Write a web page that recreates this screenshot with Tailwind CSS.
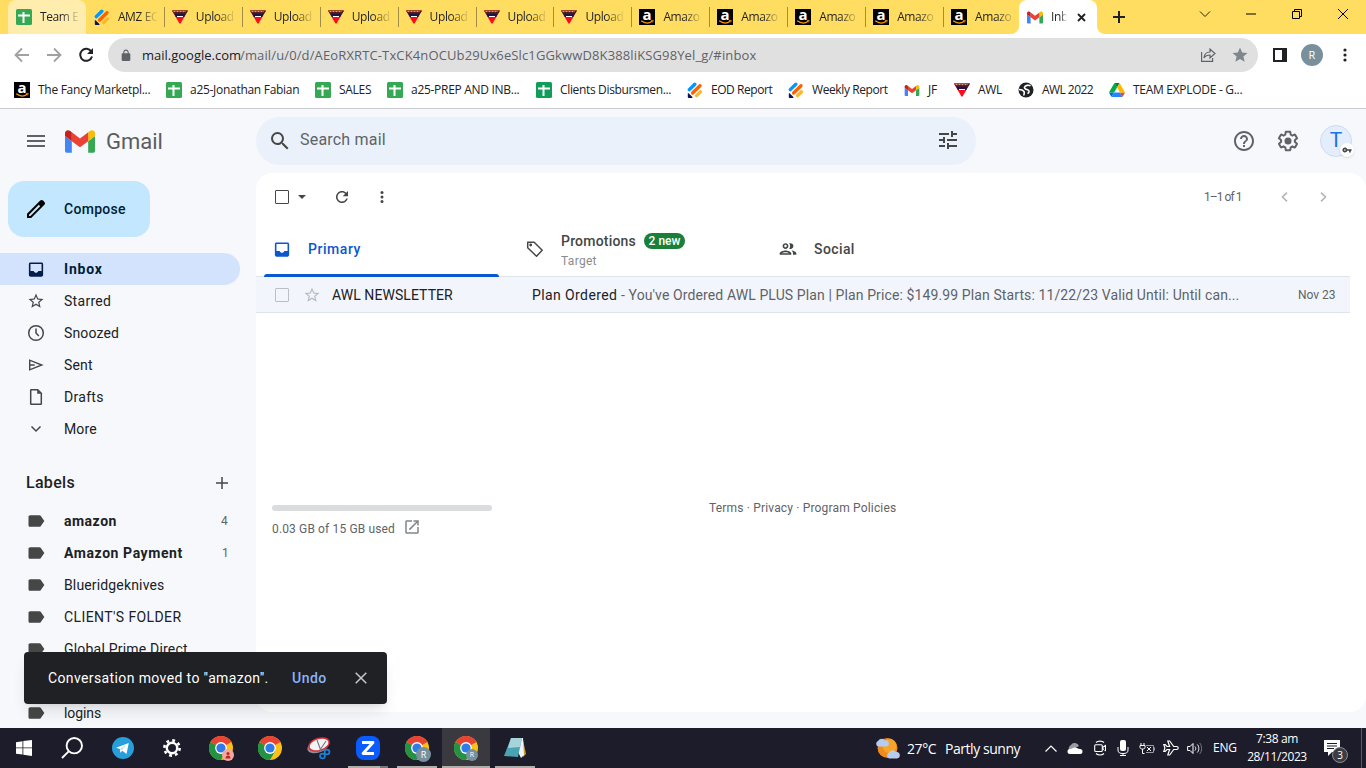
<!DOCTYPE html>
<html lang="en">
<head>
    <meta charset="UTF-8">
    <meta name="viewport" content="width=device-width, initial-scale=1.0">
    <title>Inbox - Gmail</title>
    <script src="https://cdn.jsdelivr.net/npm/@tailwindcss/browser@4"></script>
</head>
<body class="w-[1366px] h-[768px] overflow-hidden bg-[#f6f8fc] text-[#202124] font-['Roboto',sans-serif]">
    <!-- Shared icons -->
    <svg class="hidden">
        <symbol id="sheets" viewBox="0 0 16 16"><rect width="16" height="16" rx="1.500" fill="#34a853"/><path d="M2 6.500h12M7.500 3v11" stroke="#fff" stroke-width="2"/></symbol>
        <symbol id="sheets2" viewBox="0 0 16 16"><rect width="16" height="16" rx="1.500" fill="#0f9d58"/><path d="M2 6.500h12M7.500 3v11" stroke="#fff" stroke-width="2"/></symbol>
        <symbol id="jotform" viewBox="0 0 16 16"><g stroke-width="3.400" stroke-linecap="round"><path d="M2.300 7.600 7.800 2.200" stroke="#0099ff"/><path d="M5.600 11 13 3.800" stroke="#ff6100"/><path d="M9.600 13.600l3.800-3.700" stroke="#ffb629"/></g><path d="M.8 11.600V15c0 .5.4.9.9.9h3.400c.5 0 .6-.5.3-.8L1.600 11.300c-.3-.3-.8-.1-.8.3z" fill="#0a1551"/></symbol>
        <symbol id="awl" viewBox="0 0 16 16"><path d="M0 1.500h16L8.600 14.500H7.400z" fill="#ff0a1a"/><path d="M0 1.500h16l-1.500 2.800h-13z" fill="#4a1a1c"/><path d="M1.800 4.300h12.400l-2 3.700H3.800z" fill="#1a1646"/><path d="M1.500 2.600h12.500" stroke="#e9b08a" stroke-dasharray="2 1"/><path d="M5 7.500h6" stroke="#fff"/></symbol>
        <symbol id="amazon" viewBox="0 0 16 16"><rect width="16" height="16" fill="#000"/><text x="8" y="10.600" text-anchor="middle" font-family="Open Sans, sans-serif" font-weight="700" font-size="15" fill="#fff">a</text><path d="M2.200 11.800c3.500 2.600 8 2.600 11 .5" fill="none" stroke="#ff9900" stroke-width="1.200"/><path d="M12 11.500l2.300-.1-.7 2" fill="none" stroke="#ff9900" stroke-width=".8"/></symbol>
        <symbol id="gmail" viewBox="52 42 88 66"><path fill="#4285f4" d="M58 108h14V74L52 59v43c0 3.320 2.690 6 6 6"/><path fill="#34a853" d="M120 108h14c3.320 0 6-2.690 6-6V59l-20 15"/><path fill="#fbbc04" d="M120 48v26l20-15v-8c0-7.420-8.470-11.650-14.400-7.200"/><path fill="#ea4335" d="M72 74V48l24 18 24-18v26L96 92"/><path fill="#c5221f" d="M52 51v8l20 15V48l-5.600-4.200c-5.940-4.450-14.400-.22-14.400 7.200"/></symbol>
        <symbol id="drive" viewBox="0 0 87.300 78"><path d="m6.600 66.850 3.850 6.650c.8 1.400 1.950 2.500 3.300 3.300l13.750-23.800h-27.500c0 1.550.4 3.100 1.200 4.500z" fill="#0066da"/><path d="m43.650 25-13.750-23.800c-1.350.8-2.500 1.900-3.300 3.300l-25.400 44a9.060 9.060 0 0 0-1.200 4.500h27.500z" fill="#00ac47"/><path d="m73.550 76.800c1.350-.8 2.500-1.900 3.300-3.300l1.600-2.750 7.650-13.250c.8-1.400 1.200-2.950 1.200-4.500h-27.500l5.850 11.500z" fill="#ea4335"/><path d="m43.650 25 13.750-23.800c-1.350-.8-2.900-1.200-4.500-1.200h-18.500c-1.600 0-3.150.45-4.500 1.200z" fill="#00832d"/><path d="m59.800 53h-32.300l-13.750 23.800c1.350.8 2.900 1.200 4.500 1.200h50.800c1.600 0 3.150-.45 4.500-1.200z" fill="#2684fc"/><path d="m73.400 26.500-12.700-22c-.8-1.400-1.950-2.500-3.300-3.300l-13.750 23.800 16.150 28h27.450c0-1.550-.4-3.100-1.200-4.500z" fill="#ffba00"/></symbol>
        <symbol id="globe" viewBox="0 0 16 16"><circle cx="8" cy="8" r="7.500" fill="#202124"/><path d="M12.500 3.800C10.500 2.500 7 3.500 6.500 5.200s2 2.300 3.500 2.800 1.500 2.500-.5 3.500M1 7.500c2 0 4 .5 5 2s-.5 2.500 0 4" fill="none" stroke="#fff" stroke-width="1.600"/></symbol>
        <symbol id="inbox" viewBox="0 0 24 24"><path fill-rule="evenodd" d="M19 3H5c-1.100 0-2 .9-2 2v14c0 1.100.9 2 2 2h14c1.100 0 2-.9 2-2V5c0-1.100-.9-2-2-2zM5 5v8.800h4c.6 1.500 1.700 2.300 3 2.300s2.400-.8 3-2.300h4V5z"/></symbol>
        <symbol id="star" viewBox="0 0 24 24"><path d="M22 9.240l-7.190-.62L12 2 9.190 8.630 2 9.240l5.460 4.730L5.820 21 12 17.270 18.180 21l-1.630-7.030L22 9.240zM12 15.400l-3.760 2.270 1-4.280-3.320-2.880 4.380-.38L12 6.100l1.710 4.040 4.380.38-3.320 2.880 1 4.280L12 15.400z"/></symbol>
        <symbol id="label" viewBox="0 0 24 24"><path d="M17.630 5.840C17.270 5.330 16.670 5 16 5L5 5.010C3.900 5.010 3 5.900 3 7v10c0 1.100.9 1.990 2 1.990L16 19c.67 0 1.270-.33 1.630-.84L22 12l-4.370-6.160z"/></symbol>
        <symbol id="chrome" viewBox="0 0 24 24"><circle cx="12" cy="12" r="12" fill="#fbc116"/><path d="M12 12 1.600 6A12 12 0 0 1 22.400 6z" fill="#ea4335"/><path d="M1.600 6A12 12 0 0 0 12 24l5.200-9z" fill="#229342"/><circle cx="12" cy="12" r="5.900" fill="#fff"/><circle cx="12" cy="12" r="4.600" fill="#2f7bea"/></symbol>
    </svg>

    <!-- Tab strip -->
    <div class="h-[34px] bg-[#ffdd60] flex items-stretch font-['Open_Sans',sans-serif] text-[12px]">
        <div id="tabs" class="flex pl-2 w-[1021px] shrink-0"></div>
        <div class="relative -ml-[2px] w-[78px] bg-white rounded-t-lg flex items-center pl-2 shrink-0">
            <svg class="absolute -left-2 bottom-0 w-2 h-2" viewBox="0 0 8 8" fill="#fff"><path d="M8 0v8H0a8 8 0 0 0 8-8z"/></svg>
            <svg class="absolute -right-2 bottom-0 w-2 h-2" viewBox="0 0 8 8" fill="#fff"><path d="M0 0v8h8a8 8 0 0 1-8-8z"/></svg>
            <svg class="w-4 h-[13px]"><use href="#gmail"/></svg>
            <span class="ml-2 w-[18px] overflow-hidden whitespace-nowrap tracking-[-0.4px] bg-linear-to-r from-[#202124] from-50% to-white to-90% bg-clip-text text-transparent">Inb</span>
            <svg class="ml-2 w-[9px] h-[9px]" viewBox="0 0 9 9" stroke="#202124" stroke-width="1.800"><path d="M1 1l7 7M8 1l-7 7"/></svg>
        </div>
        <div class="flex-1 flex items-center">
            <svg class="ml-4 w-3 h-3" viewBox="0 0 12 12" stroke="#202124" stroke-width="2"><path d="M6 0v12M0 6h12"/></svg>
            <svg class="ml-[74px] -mt-1.5 w-3 h-[7px]" viewBox="0 0 12 7" fill="none" stroke="#202124"><path d="M1 .5l5 5 5-5"/></svg>
            <svg class="ml-[35px] -mt-1.5 w-[10px] h-[2px]" viewBox="0 0 10 2"><rect y=".5" width="10" height="1" fill="#000"/></svg>
            <svg class="ml-[36px] -mt-1.5 w-[10px] h-[10px]" viewBox="0 0 10 10" fill="none" stroke="#000"><path d="M.5 2.500h7v7h-7zM2.500 2.500v-2h7v7h-2"/></svg>
            <svg class="ml-[36px] -mt-1.5 w-[10px] h-[10px]" viewBox="0 0 10 10" stroke="#000"><path d="M0 0l10 10M10 0L0 10"/></svg>
        </div>
    </div>

    <!-- Toolbar -->
    <div class="h-[38px] bg-white flex items-center pt-1 font-['Open_Sans',sans-serif]">
        <svg class="ml-[14px] w-4 h-4" viewBox="0 0 16 16" fill="none" stroke="#a0a1a3" stroke-width="1.800"><path d="M15 8H2M8 1.500 1.500 8 8 14.500"/></svg>
        <svg class="ml-4 w-4 h-4" viewBox="0 0 16 16" fill="none" stroke="#a0a1a3" stroke-width="1.800"><path d="M1 8h13M8 1.500 14.500 8 8 14.500"/></svg>
        <svg class="ml-4 w-4 h-4" viewBox="0 0 16 16" fill="none" stroke="#202124" stroke-width="2"><path d="M13.300 4.600A6 6 0 1 0 14 9.500"/><path d="M15 1v6H9z" fill="#202124" stroke="none"/></svg>
        <div class="ml-[14px] w-[1150px] h-[34px] rounded-full bg-[#e0e0e0] flex items-center pl-[10px] pr-[9px]">
            <svg class="w-4 h-[13px]" viewBox="0 0 24 24" fill="#5f6368"><path d="M18 8h-1V6c0-2.760-2.240-5-5-5S7 3.240 7 6v2H6c-1.100 0-2 .9-2 2v10c0 1.100.9 2 2 2h12c1.100 0 2-.9 2-2V10c0-1.100-.9-2-2-2zM9 6c0-1.660 1.340-3 3-3s3 1.340 3 3v2H9V6z"/></svg>
            <div class="ml-2 pt-px flex text-[13px]"><span class="w-[98px] whitespace-nowrap">mail.google.com</span><span class="w-[520px] whitespace-nowrap tracking-[0.13px] text-[#5f6368]">/mail/u/0/d/AEoRXRTC-TxCK4nOCUb29Ux6eSlc1GGkwwD8K388liKSG98Yel_g/#inbox</span></div>
            <svg class="ml-auto w-4 h-4" viewBox="0 0 16 16" fill="none" stroke="#5f6368" stroke-width="1.200"><path d="M1.600 5v9.400h11V11M4 11c.3-4 2.500-6 6-6V2l5 4.500L10 11V8c-2.500 0-4.500.6-6 3z"/></svg>
            <svg class="ml-[15px] w-[18px] h-[18px]" viewBox="0 0 24 24" fill="#80868b"><path d="M12 17.270L18.180 21l-1.640-7.030L22 9.240l-7.190-.61L12 2 9.190 8.630 2 9.240l5.460 4.730L5.820 21z"/></svg>
        </div>
        <svg class="ml-[15px] w-[14px] h-[14px]" viewBox="0 0 14 14"><path d="M1 1h12v12H1z" fill="#fff" stroke="#202124" stroke-width="2"/><path d="M9 0h5v14H9z" fill="#202124"/></svg>
        <div class="ml-[14px] w-[22px] h-[22px] rounded-full bg-[#78909c] text-white text-[11px] flex items-center justify-center">R</div>
        <svg class="ml-5 w-[4px] h-[14px]" viewBox="0 0 4 14" fill="#202124"><circle cx="2" cy="2" r="1.600"/><circle cx="2" cy="7" r="1.600"/><circle cx="2" cy="12" r="1.600"/></svg>
    </div>

    <!-- Bookmarks -->
    <div class="h-[37px] bg-white border-b border-[#c9cbce] flex items-center gap-4 pl-[14px] font-['Open_Sans',sans-serif] text-[12px] tracking-[-0.29px]">
        <div class="flex items-center gap-2"><svg class="w-4 h-4"><use href="#amazon"/></svg><span class="w-[112px] whitespace-nowrap">The Fancy Marketpl...</span></div>
        <div class="flex items-center gap-2"><svg class="w-4 h-4"><use href="#sheets"/></svg><span class="w-[109px] whitespace-nowrap">a25-Jonathan Fabian</span></div>
        <div class="flex items-center gap-2"><svg class="w-4 h-4"><use href="#sheets"/></svg><span class="w-[32px] whitespace-nowrap">SALES</span></div>
        <div class="flex items-center gap-2"><svg class="w-4 h-4"><use href="#sheets"/></svg><span class="w-[109px] whitespace-nowrap">a25-PREP AND INB...</span></div>
        <div class="flex items-center gap-2"><svg class="w-4 h-4"><use href="#sheets2"/></svg><span class="w-[111px] whitespace-nowrap tracking-[-0.34px]">Clients Disbursmen...</span></div>
        <div class="flex items-center gap-2"><svg class="w-4 h-4"><use href="#jotform"/></svg><span class="w-[61px] whitespace-nowrap tracking-[-0.45px]">EOD Report</span></div>
        <div class="flex items-center gap-2"><svg class="w-4 h-4"><use href="#jotform"/></svg><span class="w-[76px] whitespace-nowrap tracking-[-0.4px]">Weekly Report</span></div>
        <div class="flex items-center gap-2"><svg class="w-4 h-[11px]"><use href="#gmail"/></svg><span class="w-[10px] whitespace-nowrap">JF</span></div>
        <div class="flex items-center gap-2"><svg class="w-4 h-4"><use href="#awl"/></svg><span class="w-[24px] whitespace-nowrap">AWL</span></div>
        <div class="flex items-center gap-2"><svg class="w-4 h-4"><use href="#globe"/></svg><span class="w-[51px] whitespace-nowrap tracking-[-0.55px]">AWL 2022</span></div>
        <div class="flex items-center gap-2"><svg class="w-4 h-[14px]"><use href="#drive"/></svg><span class="w-[111px] whitespace-nowrap">TEAM EXPLODE - G...</span></div>
    </div>

    <!-- Gmail -->
    <div class="relative h-[619px] overflow-hidden">
        <div class="h-16 flex items-center">
            <svg class="ml-[27px] w-[18px] h-3" viewBox="0 0 18 12" fill="#5f6368"><path d="M0 0h18v2H0zM0 5h18v2H0zM0 10h18v2H0z"/></svg>
            <svg class="ml-5 w-[30px] h-[23px]"><use href="#gmail"/></svg>
            <span class="ml-[11px] pt-px w-[56px] whitespace-nowrap text-[22px] leading-none text-[#5a5d60]">Gmail</span>
            <div class="ml-[94px] w-[720px] h-12 rounded-full bg-[#eaf1fb] flex items-center">
                <svg class="ml-3 w-6 h-6" viewBox="0 0 24 24" fill="#444746"><path d="M15.500 14h-.79l-.28-.27A6.471 6.471 0 0 0 16 9.500 6.500 6.500 0 1 0 9.500 16c1.610 0 3.090-.59 4.230-1.570l.27.28v.79l5 4.990L20.490 19l-4.990-5zm-6 0C7.010 14 5 11.990 5 9.500S7.010 5 9.500 5 14 7.010 14 9.500 11.990 14 9.500 14z"/></svg>
                <span class="ml-2 pb-0.5 w-[88px] whitespace-nowrap text-[16px] tracking-[0.2px] text-[#5f6368]">Search mail</span>
                <svg class="ml-auto mr-4 -mt-0.5 w-6 h-6" viewBox="0 0 24 24" fill="#444746"><path d="M3 17v2h6v-2H3zM3 5v2h10V5H3zm10 16v-2h8v-2h-8v-2h-2v6h2zM7 9v2H3v2h4v2h2V9H7zm14 4v-2H11v2h10zm-6-4h2V7h4V5h-4V3h-2v6z"/></svg>
            </div>
            <svg class="ml-[256px] w-6 h-6" viewBox="0 0 24 24" fill="#5f6368"><path d="M11 18h2v-2h-2v2zm1-16C6.480 2 2 6.480 2 12s4.480 10 10 10 10-4.480 10-10S17.520 2 12 2zm0 18c-4.410 0-8-3.590-8-8s3.590-8 8-8 8 3.590 8 8-3.590 8-8 8zm0-14c-2.210 0-4 1.790-4 4h2c0-1.100.9-2 2-2s2 .9 2 2c0 2-3 1.750-3 5h2c0-2.250 3-2.500 3-5 0-2.210-1.790-4-4-4z"/></svg>
            <svg class="ml-5 w-6 h-6" viewBox="0 0 24 24" fill="#5f6368"><path d="M13.850 22.250h-3.700c-.74 0-1.360-.54-1.450-1.270l-.27-1.890c-.27-.14-.53-.29-.79-.46l-1.800.72c-.7.26-1.470-.03-1.810-.65L2.200 15.530c-.35-.66-.2-1.440.36-1.880l1.530-1.190c-.01-.15-.02-.3-.02-.46 0-.15.010-.31.020-.46l-1.520-1.190c-.59-.45-.74-1.260-.37-1.880l1.850-3.190c.34-.62 1.110-.9 1.790-.63l1.810.73c.26-.17.52-.32.78-.46l.27-1.910c.09-.7.71-1.250 1.440-1.250h3.700c.74 0 1.360.54 1.450 1.270l.27 1.890c.27.14.53.29.79.46l1.800-.72c.71-.26 1.480.03 1.820.65l1.840 3.180c.36.66.2 1.440-.36 1.880l-1.520 1.190c.01.15.02.3.02.46s-.01.31-.02.46l1.520 1.190c.56.45.72 1.230.37 1.860l-1.860 3.220c-.34.62-1.110.9-1.800.63l-1.800-.72c-.26.17-.52.32-.78.46l-.27 1.910c-.1.68-.72 1.220-1.460 1.220zm-3.230-2h2.760l.37-2.550.53-.22c.44-.18.88-.44 1.340-.78l.45-.34 2.380.96 1.380-2.400-2.030-1.580.07-.56c.03-.26.06-.51.06-.78s-.03-.53-.06-.78l-.07-.56 2.030-1.580-1.390-2.400-2.390.96-.45-.35c-.42-.32-.87-.58-1.330-.77l-.52-.22-.37-2.550h-2.760l-.37 2.550-.53.21c-.44.19-.88.44-1.340.79l-.45.33-2.380-.95-1.390 2.390 2.030 1.580-.07.56a7 7 0 0 0-.06.79c0 .26.02.53.06.78l.07.56-2.030 1.580 1.380 2.400 2.390-.96.45.35c.43.33.86.58 1.330.77l.53.22.38 2.550z"/><circle cx="12" cy="12" r="3.500"/></svg>
            <div class="relative ml-5 w-8 h-8 rounded-full bg-[#e4edfb] border border-[#cfdcf0] flex items-center justify-center text-[21px] text-[#1a73e8]">T
                <div class="absolute left-[19px] top-[17px] w-[14px] h-[14px] rounded-full bg-white shadow flex items-center justify-center">
                    <svg class="w-[10px] h-[10px]" viewBox="0 0 24 24" fill="#444746"><path d="M12.650 10C11.830 7.670 9.610 6 7 6c-3.310 0-6 2.690-6 6s2.690 6 6 6c2.610 0 4.830-1.670 5.650-4H17v4h4v-4h2v-4H12.650zM7 14c-1.100 0-2-.9-2-2s.9-2 2-2 2 .9 2 2-.9 2-2 2z"/></svg>
                </div>
            </div>
        </div>

        <div class="flex">
            <!-- Sidebar -->
            <div class="w-64 h-[555px] shrink-0 overflow-hidden text-[14px] tracking-[0.15px]">
                <div class="mt-2 ml-2 w-[142px] h-14 rounded-2xl bg-[#c2e7ff] flex items-center text-[#001d35] font-medium">
                    <svg class="ml-4 w-6 h-6" viewBox="0 0 24 24" fill="#000"><path d="M20.410 4.940l-1.350-1.350c-.78-.78-2.050-.78-2.830 0L3 16.820V21h4.180L20.410 7.770c.79-.78.79-2.050 0-2.830zm-14 14.120L5 19v-1.360l9.820-9.820 1.410 1.410-9.820 9.830z"/></svg>
                    <span class="ml-4 w-[63px] whitespace-nowrap tracking-[0.3px]">Compose</span>
                </div>
                <div class="mt-4 h-8 w-60 rounded-r-full bg-[#d3e3fd] flex items-center pl-[26px] gap-[18px] text-[#001d35] font-bold">
                    <svg class="w-5 h-[19px]" fill="#041e49"><use href="#inbox"/></svg>
                    <span class="w-[41px] whitespace-nowrap tracking-[0.8px]">Inbox</span>
                </div>
                <div class="h-8 flex items-center pl-[26px] gap-[18px]"><svg class="w-5 h-[18px]" fill="#444746"><use href="#star"/></svg><span class="w-[49px] whitespace-nowrap tracking-[0.3px]">Starred</span></div>
                <div class="h-8 flex items-center pl-[26px] gap-[18px]"><svg class="w-5 h-5" viewBox="0 0 20 20" fill="none" stroke="#444746" stroke-width="1.500"><circle cx="10" cy="10" r="7.300"/><path d="M10 5.500V10l2.800 3"/></svg><span class="w-[57px] whitespace-nowrap">Snoozed</span></div>
                <div class="h-8 flex items-center pl-[26px] gap-[18px]"><svg class="w-5 h-5" viewBox="0 0 20 20" fill="none" stroke="#444746" stroke-width="1.400"><path d="M3.700 5.200v9.600L15.800 10zM3.700 10h5"/></svg><span class="w-[30px] whitespace-nowrap">Sent</span></div>
                <div class="h-8 flex items-center pl-[26px] gap-[18px]"><svg class="w-5 h-5" viewBox="0 0 20 20" fill="none" stroke="#444746" stroke-width="1.500"><path d="M4.700 3.200c0-.3.200-.5.500-.5h6.500l3.600 3.600v10.500c0 .3-.2.5-.5.5H5.200c-.3 0-.5-.2-.5-.5z"/><path d="M11.200 2.700v4h4z" fill="#444746" stroke="none"/></svg><span class="w-[42px] whitespace-nowrap tracking-[0.3px]">Drafts</span></div>
                <div class="h-8 flex items-center pl-[26px] gap-[18px]"><svg class="w-5 h-5" viewBox="0 0 20 20" fill="none" stroke="#444746" stroke-width="1.500"><path d="M5.500 7.500 10 12l4.500-4.500"/></svg><span class="w-[35px] whitespace-nowrap">More</span></div>
                <div class="h-[60px] pt-4 flex items-center pl-[26px] font-medium text-[16px]">
                    <span class="w-[51px] whitespace-nowrap tracking-[0.3px]">Labels</span>
                    <svg class="ml-[139px] w-3 h-3" viewBox="0 0 12 12" stroke="#444746" stroke-width="1.500"><path d="M6 0v12M0 6h12"/></svg>
                </div>
                <div class="h-8 flex items-center pl-[26px] gap-[18px] font-bold"><svg class="w-5 h-5" fill="#444746"><use href="#label"/></svg><span class="w-[55px] whitespace-nowrap tracking-[0.5px]">amazon</span><span class="ml-auto mr-7 text-[12px] font-normal text-[#5f6368]">4</span></div>
                <div class="h-8 flex items-center pl-[26px] gap-[18px] font-bold"><svg class="w-5 h-5" fill="#444746"><use href="#label"/></svg><span class="w-[121px] whitespace-nowrap tracking-[0.58px]">Amazon Payment</span><span class="ml-auto mr-[27px] text-[12px] font-normal text-[#5f6368]">1</span></div>
                <div class="h-8 flex items-center pl-[26px] gap-[18px]"><svg class="w-5 h-5" fill="#444746"><use href="#label"/></svg><span class="w-[102px] whitespace-nowrap">Blueridgeknives</span></div>
                <div class="h-8 flex items-center pl-[26px] gap-[18px]"><svg class="w-5 h-5" fill="#444746"><use href="#label"/></svg><span class="w-[119px] whitespace-nowrap tracking-[0.4px]">CLIENT'S FOLDER</span></div>
                <div class="h-16 flex items-start pt-1.5 pl-[26px] gap-[18px]"><svg class="w-5 h-5" fill="#444746"><use href="#label"/></svg><span class="w-[126px] whitespace-nowrap tracking-[0.2px]">Global Prime Direct</span></div>
                <div class="h-8 flex items-center pl-[26px] gap-[18px]"><svg class="w-5 h-5" fill="#444746"><use href="#label"/></svg><span class="w-[40px] whitespace-nowrap tracking-[-0.1px]">logins</span></div>
            </div>

            <!-- Mail list -->
            <div class="w-[1110px] h-[539px] rounded-2xl bg-white overflow-hidden">
                <div class="h-12 flex items-center">
                    <div class="ml-[19px] w-[14px] h-[14px] border-[1.5px] border-[#444746] rounded-[1px]"></div>
                    <svg class="ml-[9px] w-2 h-1" viewBox="0 0 8 4" fill="#444746"><path d="M0 0h8L4 4z"/></svg>
                    <svg class="ml-[27px] w-[18px] h-[18px]" viewBox="0 0 24 24" fill="#444746"><path d="M17.650 6.350C16.200 4.900 14.210 4 12 4c-4.420 0-7.990 3.580-7.990 8s3.570 8 7.990 8c3.730 0 6.840-2.550 7.730-6h-2.080c-.82 2.330-3.040 4-5.650 4-3.310 0-6-2.690-6-6s2.690-6 6-6c1.660 0 3.140.69 4.220 1.780L13 11h7V4l-2.350 2.350z"/></svg>
                    <svg class="ml-[29px] w-1 h-3" viewBox="0 0 4 12" fill="#444746"><circle cx="2" cy="1.500" r="1.500"/><circle cx="2" cy="6" r="1.500"/><circle cx="2" cy="10.500" r="1.500"/></svg>
                    <span class="ml-[820px] w-[37px] whitespace-nowrap text-[12px] tracking-[-0.95px] text-[#5f6368]">1–1 of 1</span>
                    <svg class="ml-10 w-[7px] h-[10px]" viewBox="0 0 7 10" fill="none" stroke="#b4b5b6" stroke-width="1.600"><path d="M6 .7 1.500 5 6 9.300"/></svg>
                    <svg class="ml-8 w-[7px] h-[10px]" viewBox="0 0 7 10" fill="none" stroke="#b4b5b6" stroke-width="1.600"><path d="M1 .7 5.500 5 1 9.300"/></svg>
                </div>
                <div class="h-14 flex text-[14px] font-medium text-[#444746]">
                    <div class="w-[253px] flex flex-col">
                        <div class="h-[53px] pt-[3px] flex items-center gap-4 pl-4 text-[#0b57d0]">
                            <svg class="w-5 h-[19px]" fill="#0b57d0"><use href="#inbox"/></svg>
                            <span class="w-[55px] whitespace-nowrap tracking-[0.55px]">Primary</span>
                        </div>
                        <div class="ml-2 w-[235px] h-[3px] rounded-t-full bg-[#0b57d0]"></div>
                    </div>
                    <div class="w-[253px] flex items-center gap-4 pl-4">
                        <svg class="w-5 h-5" viewBox="0 0 20 20" fill="none" stroke="#444746" stroke-width="1.500" stroke-linejoin="round"><path d="M2.700 3.200h6.500l8 8-5.700 6L2.700 8.800z"/><circle cx="5.700" cy="6" r=".7"/></svg>
                        <div class="pt-0.5">
                            <div class="flex items-center gap-2 h-5"><span class="w-[75px] whitespace-nowrap tracking-[0.2px]">Promotions</span><span class="w-[41px] h-4 rounded-full bg-[#188038] text-white text-[12px] leading-4 text-center whitespace-nowrap">2 new</span></div>
                            <span class="mt-[2px] block w-[38px] whitespace-nowrap text-[12px] leading-4 font-normal tracking-[0.3px] text-[#8a8c8e]">Target</span>
                        </div>
                    </div>
                    <div class="flex items-center gap-4 pl-4">
                        <svg class="w-5 h-5" viewBox="0 0 24 24" fill="#444746"><path d="M9 13.750c-2.340 0-7 1.170-7 3.500V19h14v-1.750c0-2.330-4.660-3.500-7-3.500zM4.340 17c.84-.58 2.870-1.250 4.660-1.250s3.820.67 4.660 1.250H4.340zM9 12c1.930 0 3.500-1.570 3.500-3.500S10.930 5 9 5 5.500 6.570 5.500 8.500 7.070 12 9 12zm0-5c.83 0 1.500.67 1.500 1.500S9.830 10 9 10s-1.500-.67-1.500-1.500S8.170 7 9 7zm7.040 6.810c1.160.84 1.960 1.960 1.960 3.440V19h4v-1.750c0-2.020-3.500-3.170-5.960-3.440zM15 12c1.930 0 3.500-1.570 3.500-3.500S16.930 5 15 5c-.54 0-1.040.13-1.500.35.63.89 1 1.980 1 3.150s-.37 2.260-1 3.150c.46.22.96.35 1.500.35z"/></svg>
                        <span class="w-[43px] whitespace-nowrap tracking-[0.4px]">Social</span>
                    </div>
                </div>
                <div class="-mt-px w-[1094px] h-[37px] border-y border-[#dfe4ec] bg-[#f2f6fc] flex items-center text-[14px]">
                    <div class="ml-[19px] w-[14px] h-[14px] border-[1.5px] border-[#bcbfc3] rounded-[1px]"></div>
                    <svg class="ml-[14px] w-[18px] h-[18px]" fill="#b9bbbe"><use href="#star"/></svg>
                    <span class="ml-[11px] pt-px w-[125px] whitespace-nowrap tracking-[0.07px]">AWL NEWSLETTER</span>
                    <span class="ml-[75px] pt-px w-[86px] whitespace-nowrap tracking-[0.4px]">Plan Ordered</span>
                    <span class="ml-[3px] pt-px w-[620px] whitespace-nowrap tracking-[0.11px] text-[#5f6368]">- You've Ordered AWL PLUS Plan | Plan Price: $149.99 Plan Starts: 11/22/23 Valid Until: Until can...</span>
                    <span class="ml-[57px] w-[40px] whitespace-nowrap text-[12px] text-[#5f6368]">Nov 23</span>
                </div>
                <div class="mt-[192px] flex text-[12px] text-[#5f6368]">
                    <div class="ml-4 w-[220px]">
                        <div class="h-[6px] rounded-full bg-[#dadce0]"></div>
                        <div class="mt-[9px] flex items-center"><span class="w-[124px] whitespace-nowrap tracking-[0.14px]">0.03 GB of 15 GB used</span><svg class="ml-[7px] -mt-1 w-[18px] h-[18px]" viewBox="0 0 24 24" fill="#80868b"><path d="M19 19H5V5h7V3H5c-1.110 0-2 .9-2 2v14c0 1.100.89 2 2 2h14c1.100 0 2-.9 2-2v-7h-2v7zM14 3v2h3.590l-9.830 9.830 1.410 1.410L19 6.410V10h2V3h-7z"/></svg></div>
                    </div>
                    <span class="ml-[217px] -mt-1.5 w-[189px] whitespace-nowrap tracking-[0.17px]">Terms · Privacy · Program Policies</span>
                </div>
            </div>
        </div>

        <!-- Toast -->
        <div class="absolute left-6 top-[543px] w-[363px] h-[52px] rounded bg-[#202124] shadow-lg flex items-center text-[14px] text-white">
            <span class="ml-6 w-[222px] whitespace-nowrap tracking-[0.38px]">Conversation moved to "amazon".</span>
            <span class="ml-[22px] w-[37px] whitespace-nowrap font-medium tracking-[0.5px] text-[#8ab4f8]">Undo</span>
            <svg class="ml-[26px] w-3 h-3" viewBox="0 0 12 12" stroke="#c6c8ca" stroke-width="1.500"><path d="M.7.7l10.600 10.600M11.300.7.700 11.300"/></svg>
        </div>
    </div>

    <!-- Taskbar -->
    <div class="relative h-10 bg-[#1c1c2b] flex items-center text-white font-['Open_Sans',sans-serif]">
        <div class="flex h-10 gap-px pl-px">
            <div class="w-12 flex items-center justify-center pr-0.5"><svg class="w-4 h-4" viewBox="0 0 16 16" fill="#fff"><path d="M0 2.200 6.500 1.200v6.300H0zM7.300 1.100 16 0v7.500H7.300zM0 8.300h6.500v6.300L0 13.700zM7.300 8.300H16V16l-8.700-1.200z"/></svg></div>
            <div class="w-12 flex items-center justify-center pr-1"><svg class="w-[22px] h-[22px]" viewBox="0 0 22 22" fill="none" stroke="#fff" stroke-width="1.900"><circle cx="13.300" cy="8.700" r="7.700"/><path d="M7.700 14.300 1 21"/></svg></div>
            <div class="w-12 flex items-center justify-center"><svg class="w-[22px] h-[22px]" viewBox="0 0 22 22"><circle cx="11" cy="11" r="11" fill="#279fda"/><path d="M4 10.800 16.800 6l-2.300 11-4.200-3.200-2 2-.4-3.800z" fill="#fff"/><path d="M7.900 12l6.400-4.200-4.600 5.600" fill="#c6dcec"/></svg></div>
            <div class="w-12 flex items-center justify-center"><svg class="w-[18px] h-[18px]" viewBox="0 0 18 18" fill="none" stroke="#fff"><circle cx="9" cy="9" r="5.200" stroke-width="2.400"/><circle cx="9" cy="9" r="7.600" stroke-width="2.600" stroke-dasharray="2.800 3.170"/></svg></div>
            <div class="relative w-12 flex items-center justify-center"><svg class="w-6 h-6"><use href="#chrome"/></svg><svg class="absolute left-[25px] top-[21px] w-3 h-3" viewBox="0 0 12 12"><circle cx="6" cy="6" r="6" fill="#f3a9a0"/><circle cx="6" cy="4.500" r="1.500" fill="#c5221f"/><path d="M3.500 9.500c0-4 5-4 5 0z" fill="#c5221f"/></svg></div>
            <div class="w-12 flex items-center justify-center"><svg class="w-6 h-6"><use href="#chrome"/></svg></div>
            <div class="w-12 flex items-center justify-center"><svg class="w-6 h-6" viewBox="0 0 24 24"><ellipse cx="11" cy="10.500" rx="11" ry="6" transform="rotate(-18 11 10.500)" fill="#8d9096"/><ellipse cx="12" cy="8.500" rx="10.500" ry="6" transform="rotate(-18 12 8.500)" fill="#f4f4f6" stroke="#d8303a" stroke-width="1.500"/><path d="M10 4l4 11M19 5l-6 9" stroke="#777c85" stroke-width="1.200"/><g fill="none" stroke="#1d7fd0" stroke-width="1.800"><circle cx="20" cy="16" r="2.400"/><circle cx="15.500" cy="20" r="2.400"/></g></svg></div>
            <div class="relative w-12 flex items-center justify-center"><svg class="w-6 h-6" viewBox="0 0 24 24"><rect width="24" height="24" rx="8" fill="#0b5cff"/><path d="M6 6.500h11L7 17.500h11" fill="none" stroke="#fff" stroke-width="2.800" stroke-linejoin="round"/></svg><div class="absolute left-1 bottom-0 w-10 h-[2px] bg-[#b1aea9] border-r-8 border-[#77777b]"></div></div>
            <div class="relative w-12 flex items-center justify-center"><svg class="w-6 h-6"><use href="#chrome"/></svg><span class="absolute left-[23px] top-[19px] w-[15px] h-[15px] rounded-full bg-[#78909c] text-[9px] leading-[15px] text-center">R</span><div class="absolute left-1 bottom-0 w-10 h-[2px] bg-[#b1aea9]"></div></div>
            <div class="relative w-12 bg-[#39393f] flex items-center justify-center"><svg class="w-6 h-6"><use href="#chrome"/></svg><span class="absolute left-[24px] top-[21px] w-3 h-3 rounded-full bg-[#78909c] text-[7px] leading-3 text-center">R</span><div class="absolute left-0 bottom-0 w-12 h-[2px] bg-[#b1aea9]"></div></div>
            <div class="relative w-12 flex items-center justify-center"><svg class="w-6 h-6" viewBox="0 0 24 24"><path d="M20 4l3 14-3 3z" fill="#c99b3b"/><path d="M8 2h12l1 17-3 3z" fill="#eef3f4"/><path d="M8 2h11l-4 19L1 20z" fill="#4aa3b3"/><path d="M8 2h11l-2 9-12 1z" fill="#a7d3da"/></svg><div class="absolute left-1 bottom-0 w-10 h-[2px] bg-[#b1aea9]"></div></div>
        </div>

        <svg class="ml-[336px] w-[25px] h-[22px]" viewBox="0 0 25 22"><circle cx="12.500" cy="11" r="10" fill="#f08a1a"/><circle cx="14.500" cy="9" r="7" fill="#f7a428"/><path d="M3 9.500a3 3 0 0 1 0-5.500 4 4 0 0 1 7-.5 3 3 0 0 1 1.500 6z" fill="#b6cdf2"/><path d="M14 21.500a3.300 3.300 0 0 1 0-6 4 4 0 0 1 7-.5 3.200 3.200 0 0 1 1 6.500z" fill="#b6cdf2"/></svg>
        <span class="ml-[7px] w-[31px] whitespace-nowrap text-[14px] tracking-[-0.4px]">27°C</span>
        <span class="ml-[7px] w-[77px] whitespace-nowrap text-[14px] tracking-[-0.45px]">Partly sunny</span>
        <svg class="ml-[23px] w-3 h-[7px]" viewBox="0 0 12 7" fill="none" stroke="#fff" stroke-width="1.200"><path d="M.5 6.500 6 1l5.500 5.500"/></svg>
        <svg class="ml-[10px] w-4 h-[11px]" viewBox="0 0 16 11"><path d="M2.500 8A4 4 0 0 1 4 2a4.500 4.500 0 0 1 8 1z" fill="#9b9ba3"/><path d="M3 11a2.500 2.500 0 0 1 0-5c2-.2 3-1.500 5-1.500S11 6 13 6a2.500 2.500 0 0 1 0 5z" fill="#fff"/></svg>
        <svg class="ml-[11px] w-3 h-4" viewBox="0 0 12 16" fill="none" stroke="#fff" stroke-width="1.100"><rect x=".7" y="4.700" width="7.600" height="6.800" rx="1"/><path d="M8.500 7.500l3-2v5l-3-2M2 2.500C4 .6 8 .6 10 2.500M2 13.500c2 1.900 6 1.900 8 0"/></svg>
        <svg class="ml-[11px] w-3 h-4" viewBox="0 0 12 16"><rect x="3" width="6" height="11" rx="2" fill="#fff"/><path d="M1 7v3c0 3 2 3.500 5 3.500s5-.5 5-3.500V7M6 13v2.500M3 15.500h6" fill="none" stroke="#fff"/></svg>
        <svg class="ml-[10px] w-4 h-[13px]" viewBox="0 0 16 13" fill="none" stroke="#fff"><path d="M1 3.500h5v2c0 2-5 2-5 0zM2 3V1M5 3V1M3.500 7v4.500h2"/><path d="M7 3.500h7.500v7H7M15.500 5.500v3" stroke="#9a9aa2"/><path d="M8 5l4 4M12 5L8 9"/></svg>
        <svg class="ml-2 w-4 h-4" viewBox="0 0 16 16" fill="none" stroke="#fff" stroke-width="1.200"><path d="M.8 4.500h1.400L4 6.500h2.600L4.800 1h1.900l4 5.500h3c2 0 2 3 0 3h-3l-4 5.500H4.800l1.800-5.500H4l-1.800 2H.8L1.900 8z"/></svg>
        <svg class="ml-2 w-4 h-[13px]" viewBox="0 0 16 13" fill="none" stroke="#fff"><path d="M.6 4.500h2.500L6 1.500v10l-2.900-3H.6zM8 4.500c1 1 1 3 0 4M10.300 2.500c2 2 2 6 0 8"/><path d="M12.700 1c2.500 3 2.500 8 0 11" stroke="#77777f"/></svg>
        <span class="ml-[10px] w-[25px] whitespace-nowrap text-[12px] tracking-[-0.2px]">ENG</span>
        <div class="ml-[9px] w-[60px] flex flex-col items-center text-[12px] leading-[18px]">
            <span class="whitespace-nowrap tracking-[-0.4px]">7:38 am</span>
            <span class="whitespace-nowrap tracking-[-0.4px]">28/11/2023</span>
        </div>
        <div class="relative ml-[17px] w-6 h-6">
            <svg class="w-4 h-4 mt-1" viewBox="0 0 16 16"><path d="M0 0h16v12H8l-4 4v-4H0z" fill="#fff"/><path d="M3 3.500h10M3 6h10M3 8.500h7" stroke="#1c1c2b"/></svg>
            <span class="absolute left-2 top-[11px] w-4 h-4 rounded-full bg-[#3c3c42] border border-[#8b8b90] text-[10px] leading-[14px] text-center">3</span>
        </div>
        <div class="absolute right-[4px] top-0 w-px h-10 bg-[#5b5b66]"></div>
    </div>

    <script>
        const tabs = [
            ['sheets', 'Team E'], ['jotform', 'AMZ EC'],
            ['awl', 'Upload'], ['awl', 'Upload'], ['awl', 'Upload'], ['awl', 'Upload'], ['awl', 'Upload'], ['awl', 'Upload'],
            ['amazon', 'Amazo'], ['amazon', 'Amazo'], ['amazon', 'Amazo'], ['amazon', 'Amazo'], ['amazon', 'Amazo']
        ];
        document.getElementById('tabs').innerHTML = tabs.map(([icon, title], i) => `
            <div class="flex-1 flex items-center pl-2 ${i === 0 ? 'bg-[#ffedae] rounded-t-lg' : ''}">
                <svg class="w-4 h-4 shrink-0"><use href="#${icon}"/></svg>
                <span class="ml-2 w-[42px] shrink-0 overflow-hidden whitespace-nowrap tracking-[-0.4px] bg-linear-to-r from-[#202124] from-50% to-transparent to-95% bg-clip-text text-transparent">${title}</span>
                <div class="ml-auto -mr-px w-px h-5 ${i === 0 || i === 12 ? '' : 'bg-[#a08c46]'}"></div>
            </div>`).join('');
    </script>
</body>
</html>
